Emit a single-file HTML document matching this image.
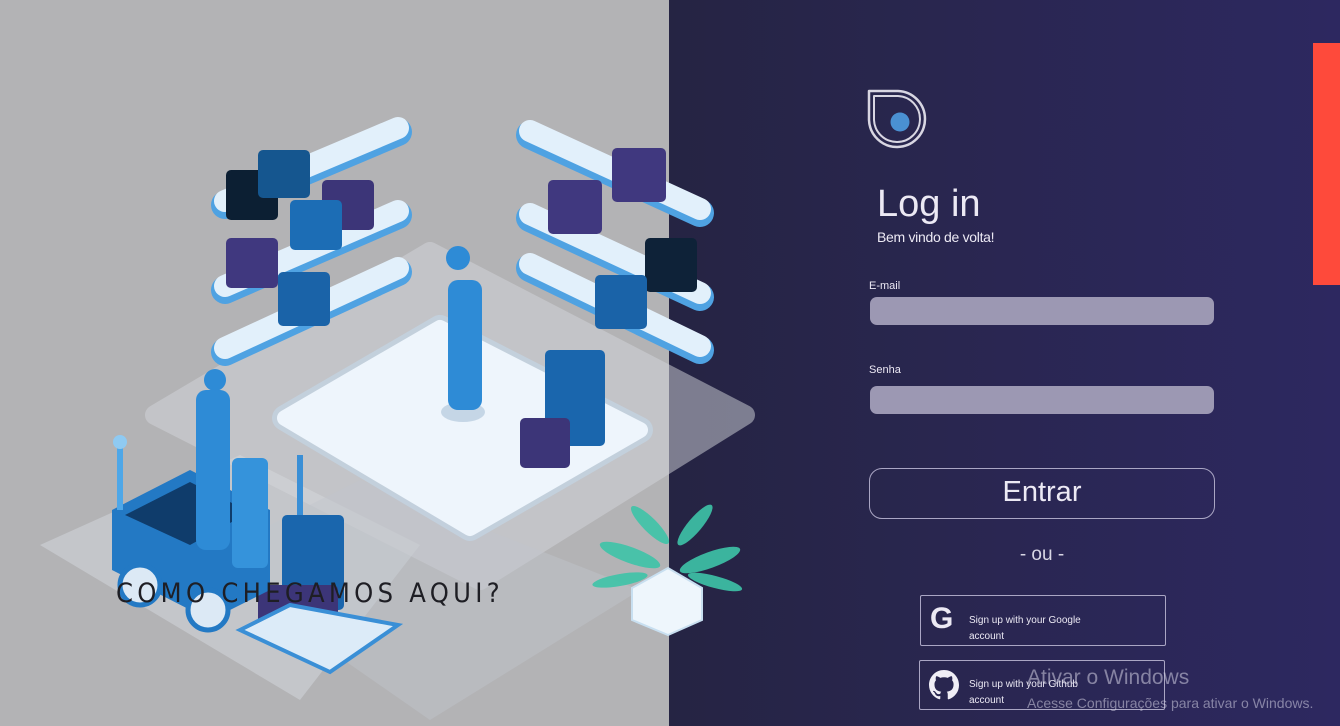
<!DOCTYPE html>
<html><head><meta charset="utf-8"><style>
html,body{margin:0;padding:0;width:1340px;height:726px;overflow:hidden;background:#b3b3b5;font-family:"Liberation Sans",sans-serif}
#right{position:absolute;left:669px;top:0;width:671px;height:726px;background:linear-gradient(90deg,#252443 0%,#29264f 40%,#2d2860 100%)}
.t{position:absolute;color:#ece9f4;white-space:nowrap}
.inp{position:absolute;left:870px;width:344px;height:28px;border-radius:7px;background:#9c98b3}
.btn{position:absolute;border:1.5px solid #aaa6c4;box-sizing:border-box}
</style></head><body>
<div id="right"></div>
<svg width="790" height="726" style="position:absolute;left:0;top:0">
<polygon points="40,545 240,455 420,545 300,700" fill="#c8cacf" opacity=".8" stroke-linejoin="round"/>
<polygon points="155,415 430,252 745,415 480,580" fill="#d4d6db" opacity=".5" stroke="#d4d6db" stroke-width="20" stroke-linejoin="round"/>
<polygon points="200,560 360,480 640,590 430,720" fill="#c2c6cc" opacity=".45"/>
<polygon points="285,418 440,328 640,430 470,528" fill="none" stroke="#c4dcf0" stroke-width="26" stroke-linejoin="round" opacity=".5"/>
<polygon points="285,418 440,328 640,430 470,528" fill="#eef5fc" stroke="#eef5fc" stroke-width="16" stroke-linejoin="round"/>
<line x1="300" y1="455" x2="300" y2="600" stroke="#3a8fd6" stroke-width="6"/>
<g stroke-linecap="round">
<line x1="225" y1="205" x2="398" y2="132" stroke="#4fa2e2" stroke-width="28"/>
<line x1="225" y1="201" x2="398" y2="128" stroke="#e2f0fb" stroke-width="22"/>
<line x1="225" y1="290" x2="398" y2="215" stroke="#4fa2e2" stroke-width="28"/>
<line x1="225" y1="286" x2="398" y2="211" stroke="#e2f0fb" stroke-width="22"/>
<line x1="225" y1="352" x2="398" y2="272" stroke="#4fa2e2" stroke-width="28"/>
<line x1="225" y1="348" x2="398" y2="268" stroke="#e2f0fb" stroke-width="22"/>
<line x1="530" y1="135" x2="700" y2="213" stroke="#4fa2e2" stroke-width="28"/>
<line x1="530" y1="131" x2="700" y2="209" stroke="#e2f0fb" stroke-width="22"/>
<line x1="530" y1="218" x2="700" y2="297" stroke="#4fa2e2" stroke-width="28"/>
<line x1="530" y1="214" x2="700" y2="293" stroke="#e2f0fb" stroke-width="22"/>
<line x1="530" y1="268" x2="700" y2="350" stroke="#4fa2e2" stroke-width="28"/>
<line x1="530" y1="264" x2="700" y2="346" stroke="#e2f0fb" stroke-width="22"/>
</g>
<g>
<rect x="226" y="170" width="52" height="50" rx="5" fill="#0c1f33"/>
<rect x="258" y="150" width="52" height="48" rx="5" fill="#15568f"/>
<rect x="322" y="180" width="52" height="50" rx="5" fill="#3c3578"/>
<rect x="290" y="200" width="52" height="50" rx="5" fill="#1c6db5"/>
<rect x="226" y="238" width="52" height="50" rx="5" fill="#40387f"/>
<rect x="278" y="272" width="52" height="54" rx="5" fill="#1a63a8"/>
<rect x="612" y="148" width="54" height="54" rx="5" fill="#40387f"/>
<rect x="548" y="180" width="54" height="54" rx="5" fill="#40387f"/>
<rect x="645" y="238" width="52" height="54" rx="5" fill="#0e2238"/>
<rect x="595" y="275" width="52" height="54" rx="5" fill="#1a63a8"/>
<rect x="545" y="350" width="60" height="96" rx="5" fill="#1a66ad"/>
<rect x="520" y="418" width="50" height="50" rx="5" fill="#3c3578"/>
<rect x="282" y="515" width="62" height="95" rx="5" fill="#1a66ad"/>
<rect x="258" y="585" width="80" height="50" rx="5" fill="#3c3578"/>
<polygon points="240,630 290,605 398,625 330,672" fill="#dcebf8" stroke="#3a8fd6" stroke-width="4"/>
</g>
<polygon points="112,510 190,470 270,510 270,590 210,620 112,570" fill="#2379c4"/>
<polygon points="125,515 190,482 250,512 190,545" fill="#0f3c6b"/>
<circle cx="140" cy="585" r="20" fill="#dce9f5" stroke="#2379c4" stroke-width="5"/>
<circle cx="208" cy="610" r="20" fill="#dce9f5" stroke="#2379c4" stroke-width="5"/>
<rect x="117" y="440" width="6" height="70" fill="#4ea7e8"/><circle cx="120" cy="442" r="7" fill="#8fcaf2"/>
<rect x="232" y="458" width="36" height="110" rx="6" fill="#3593db"/>
<rect x="196" y="390" width="34" height="160" rx="10" fill="#2e8bd6"/>
<circle cx="215" cy="380" r="11" fill="#2e8bd6"/>
<ellipse cx="463" cy="412" rx="22" ry="10" fill="#c5d6e6"/>
<rect x="448" y="280" width="34" height="130" rx="10" fill="#2e8bd6"/>
<circle cx="458" cy="258" r="12" fill="#2e8bd6"/>
<polygon points="632,588 668,568 702,588 702,620 668,635 632,620" fill="#eef6fc" stroke="#c8dff0" stroke-width="2"/>
<g fill="#3ec4a8" opacity=".9">
<ellipse cx="630" cy="555" rx="32" ry="8" transform="rotate(20 630 555)"/>
<ellipse cx="710" cy="560" rx="32" ry="8" transform="rotate(-20 710 560)"/>
<ellipse cx="650" cy="525" rx="26" ry="7" transform="rotate(45 650 525)"/>
<ellipse cx="695" cy="525" rx="26" ry="7" transform="rotate(-50 695 525)"/>
<ellipse cx="620" cy="580" rx="28" ry="6" transform="rotate(-10 620 580)"/>
<ellipse cx="715" cy="582" rx="28" ry="6" transform="rotate(15 715 582)"/>
</g>
</svg>
<div style="position:absolute;left:116px;top:578px;font-size:27px;letter-spacing:4.3px;color:#1e1e24;font-family:'DejaVu Sans Condensed','Liberation Sans',sans-serif;font-weight:300">COMO CHEGAMOS AQUI?</div>
<div style="position:absolute;left:1313px;top:43px;width:27px;height:242px;background:#fe4a3b"></div>
<svg width="64" height="64" style="position:absolute;left:866px;top:88px">
<path d="M3,3 H32 A28,28 0 1 1 3,32 Z" fill="none" stroke="#d8d6e2" stroke-width="2.5" stroke-linejoin="round"/>
<path d="M8,8 H32 A23,23 0 1 1 8,32 Z" fill="none" stroke="#d8d6e2" stroke-width="2" stroke-linejoin="round"/>
<circle cx="34" cy="34" r="9.5" fill="#4a90d2"/>
</svg>
<div class="t" style="left:877px;top:183px;font-size:38px">Log in</div>
<div class="t" style="left:877px;top:229px;font-size:14px;letter-spacing:-.3px">Bem vindo de volta!</div>
<div class="t" style="left:869px;top:280px;font-size:11px">E-mail</div>
<div class="inp" style="top:297px"></div>
<div class="t" style="left:869px;top:364px;font-size:11px">Senha</div>
<div class="inp" style="top:386px"></div>
<div class="btn" style="left:869px;top:468px;width:346px;height:51px;border-radius:13px"></div>
<div class="t" style="left:869px;top:476px;width:346px;text-align:center;font-size:29px">Entrar</div>
<div class="t" style="left:1010px;top:544px;width:64px;text-align:center;font-size:19px;color:#d8d6e4">- ou -</div>
<div class="btn" style="left:920px;top:595px;width:246px;height:51px;border-radius:2px"></div>
<div class="t" style="left:930px;top:602px;font-size:30px;font-weight:bold">G</div>
<div class="t" style="left:969px;top:613px;font-size:10px;line-height:16px">Sign up with your Google<br>account</div>
<div class="btn" style="left:919px;top:660px;width:246px;height:50px;border-radius:2px"></div>
<svg width="30" height="30" style="position:absolute;left:929px;top:670px" viewBox="0 0 16 16"><path fill="#f0eef6" d="M8 0C3.58 0 0 3.580 0 8c0 3.54 2.290 6.530 5.470 7.590.4.07.55-.17.55-.38v-1.330c-2.230.48-2.700-1.070-2.700-1.070-.36-.93-.89-1.170-.89-1.170-.73-.5.05-.49.05-.49.8.06 1.230.83 1.230.83.71 1.230 1.870.87 2.330.66.07-.52.28-.87.51-1.070-1.780-.2-3.640-.89-3.640-3.950 0-.87.31-1.590.82-2.150-.08-.2-.36-1.020.08-2.120 0 0 .67-.21 2.200.82a7.600 7.600 0 0 1 4 0c1.530-1.040 2.200-.82 2.200-.82.44 1.100.16 1.920.08 2.120.51.56.82 1.270.82 2.150 0 3.070-1.870 3.750-3.650 3.950.29.25.54.73.54 1.480v2.200c0 .21.15.46.55.38A8 8 0 0 0 16 8c0-4.420-3.580-8-8-8z"/></svg>
<div class="t" style="left:969px;top:677px;font-size:10px;line-height:16px">Sign up with your Github<br>account</div>
<div class="t" style="left:1027px;top:666px;font-size:21px;color:rgba(210,208,225,.55)">Ativar o Windows</div>
<div class="t" style="left:1027px;top:695px;font-size:14px;color:rgba(210,208,225,.55)">Acesse Configurações para ativar o Windows.</div>
</body></html>
